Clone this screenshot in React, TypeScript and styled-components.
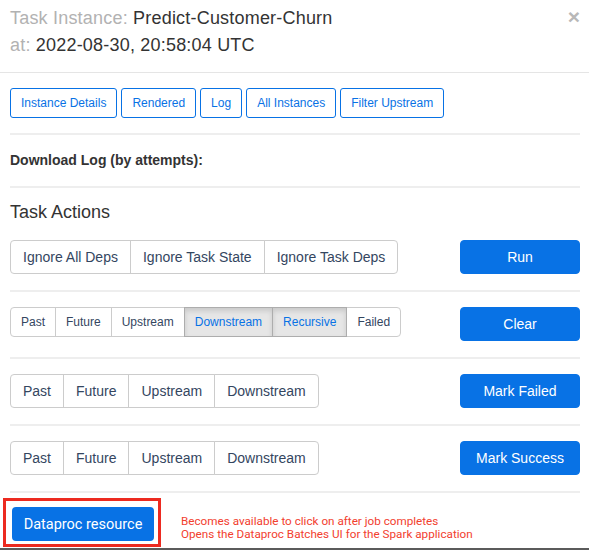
import React from "react";
import styled, { createGlobalStyle, css } from "styled-components";

const GlobalStyle = createGlobalStyle`
  html, body { margin: 0; padding: 0; background: #fff; }
  body { font-family: "Liberation Sans", Arial, Helvetica, sans-serif; color: #333; }
  * { box-sizing: border-box; }
`;

const BLUE = "#0872e5";

const Modal = styled.div`
  width: 589px;
  height: 550px;
  overflow: hidden;
  display: flex;
  flex-direction: column;
  border-bottom: 2px solid #5b5b5b;
`;

const Header = styled.div`
  display: flex;
  justify-content: space-between;
  align-items: flex-start;
  padding: 5px 10px 13px;
  border-bottom: 1px solid #e5e5e5;
`;

const Title = styled.h4`
  margin: 0;
  font-size: 18px;
  line-height: 27px;
  font-weight: 500;
  letter-spacing: 0.2px;
  color: #333;
`;

const Label = styled.span`
  color: #b2b2b2;
`;

const Close = styled.button`
  border: 0;
  background: none;
  padding: 0;
  margin: 1px -1px 0 0;
  font-family: "Liberation Sans", Arial, sans-serif;
  font-size: 21px;
  font-weight: 700;
  line-height: 21px;
  color: #b8b8b8;
  cursor: pointer;
`;

const Body = styled.div`
  padding: 15px 9px 0 10px;
  display: flex;
  flex-direction: column;
`;

const NavRow = styled.div`
  display: flex;
  gap: 4px;
`;

const NavButton = styled.button`
  height: 30px;
  padding: 0 10px;
  border: 1px solid ${BLUE};
  border-radius: 3px;
  background: #fff;
  color: ${BLUE};
  font-family: "Liberation Sans", Arial, sans-serif;
  font-size: 12px;
  cursor: pointer;
`;

const Rule = styled.hr<{ $top?: number; $bottom?: number }>`
  border: 0;
  border-top: 2px solid #eee;
  margin: ${(p) => p.$top ?? 16}px 0 ${(p) => p.$bottom ?? 15}px;
`;

const SubHead = styled.div`
  font-size: 14px;
  font-weight: 700;
  line-height: 20px;
  color: #333;
`;

const SectionTitle = styled.h4`
  margin: 0 0 18px;
  font-size: 18px;
  line-height: 20px;
  font-weight: 500;
  color: #333;
`;

const ActionRow = styled.div`
  display: flex;
  justify-content: space-between;
  align-items: flex-start;
  height: 34px;
`;

const Group = styled.div`
  display: flex;
`;

const GroupButton = styled.button<{ $small?: boolean; $active?: boolean }>`
  height: ${(p) => (p.$small ? 30 : 34)}px;
  padding: 0 ${(p) => (p.$small ? 10 : 12)}px;
  font-family: "Liberation Sans", Arial, sans-serif;
  font-size: ${(p) => (p.$small ? 12 : 14)}px;
  color: #34465f;
  background: #fff;
  border: 1px solid #ccc;
  border-radius: 0;
  cursor: pointer;
  & + & { margin-left: -1px; }
  &:first-child { border-radius: 4px 0 0 4px; }
  &:last-child { border-radius: 0 4px 4px 0; }
  ${(p) =>
    p.$active &&
    css`
      background: #e6e6e6;
      border-color: #adadad;
      color: ${BLUE};
      box-shadow: inset 0 3px 5px rgba(0, 0, 0, 0.125);
      position: relative;
      z-index: 1;
    `}
`;

const PrimaryButton = styled.button`
  width: 120px;
  height: 34px;
  border: 1px solid ${BLUE};
  border-radius: 4px;
  background: ${BLUE};
  color: #fff;
  font-family: "Liberation Sans", Arial, sans-serif;
  font-size: 14px;
  cursor: pointer;
`;

const Footer = styled.div`
  display: flex;
  align-items: flex-start;
  margin-top: 5px;
  margin-left: -7px;
`;

const Highlight = styled.div`
  border: 3px solid #ec2a20;
  padding: 6px 4px 3px 6px;
`;

const ResourceButton = styled.button`
  width: 142px;
  height: 34px;
  border: 0;
  border-radius: 4px;
  background: ${BLUE};
  color: #fff;
  font-family: Roboto, "Liberation Sans", sans-serif;
  font-size: 14.5px;
  cursor: pointer;
`;

const Note = styled.div`
  margin: 17px 0 0 20px;
  font-family: Roboto, "Liberation Sans", sans-serif;
  font-size: 11.7px;
  line-height: 12.5px;
  color: #f2402e;
`;

type Btn = { label: string; active?: boolean };

const rows: { small?: boolean; buttons: Btn[]; action: string }[] = [
  {
    buttons: [
      { label: "Ignore All Deps" },
      { label: "Ignore Task State" },
      { label: "Ignore Task Deps" },
    ],
    action: "Run",
  },
  {
    small: true,
    buttons: [
      { label: "Past" },
      { label: "Future" },
      { label: "Upstream" },
      { label: "Downstream", active: true },
      { label: "Recursive", active: true },
      { label: "Failed" },
    ],
    action: "Clear",
  },
  {
    buttons: [
      { label: "Past" },
      { label: "Future" },
      { label: "Upstream" },
      { label: "Downstream" },
    ],
    action: "Mark Failed",
  },
  {
    buttons: [
      { label: "Past" },
      { label: "Future" },
      { label: "Upstream" },
      { label: "Downstream" },
    ],
    action: "Mark Success",
  },
];

export default function App() {
  return (
    <>
      <GlobalStyle />
      <Modal>
        <Header>
          <Title>
            <Label>Task Instance: </Label>Predict-Customer-Churn
            <br />
            <Label>at: </Label>2022-08-30, 20:58:04 UTC
          </Title>
          <Close aria-label="Close">×</Close>
        </Header>
        <Body>
          <NavRow>
            <NavButton>Instance Details</NavButton>
            <NavButton>Rendered</NavButton>
            <NavButton>Log</NavButton>
            <NavButton>All Instances</NavButton>
            <NavButton>Filter Upstream</NavButton>
          </NavRow>
          <Rule $top={15} $bottom={15} />
          <SubHead>Download Log (by attempts):</SubHead>
          <Rule $top={16} $bottom={14} />
          <SectionTitle>Task Actions</SectionTitle>
          {rows.map((row, i) => (
            <React.Fragment key={row.action}>
              {i > 0 && <Rule />}
              <ActionRow>
                <Group>
                  {row.buttons.map((b) => (
                    <GroupButton key={b.label} $small={row.small} $active={b.active}>
                      {b.label}
                    </GroupButton>
                  ))}
                </Group>
                <PrimaryButton>{row.action}</PrimaryButton>
              </ActionRow>
            </React.Fragment>
          ))}
          <Rule $bottom={0} />
          <Footer>
            <Highlight>
              <ResourceButton>Dataproc resource</ResourceButton>
            </Highlight>
            <Note>
              Becomes available to click on after job completes
              <br />
              Opens the Dataproc Batches UI for the Spark application
            </Note>
          </Footer>
        </Body>
      </Modal>
    </>
  );
}
